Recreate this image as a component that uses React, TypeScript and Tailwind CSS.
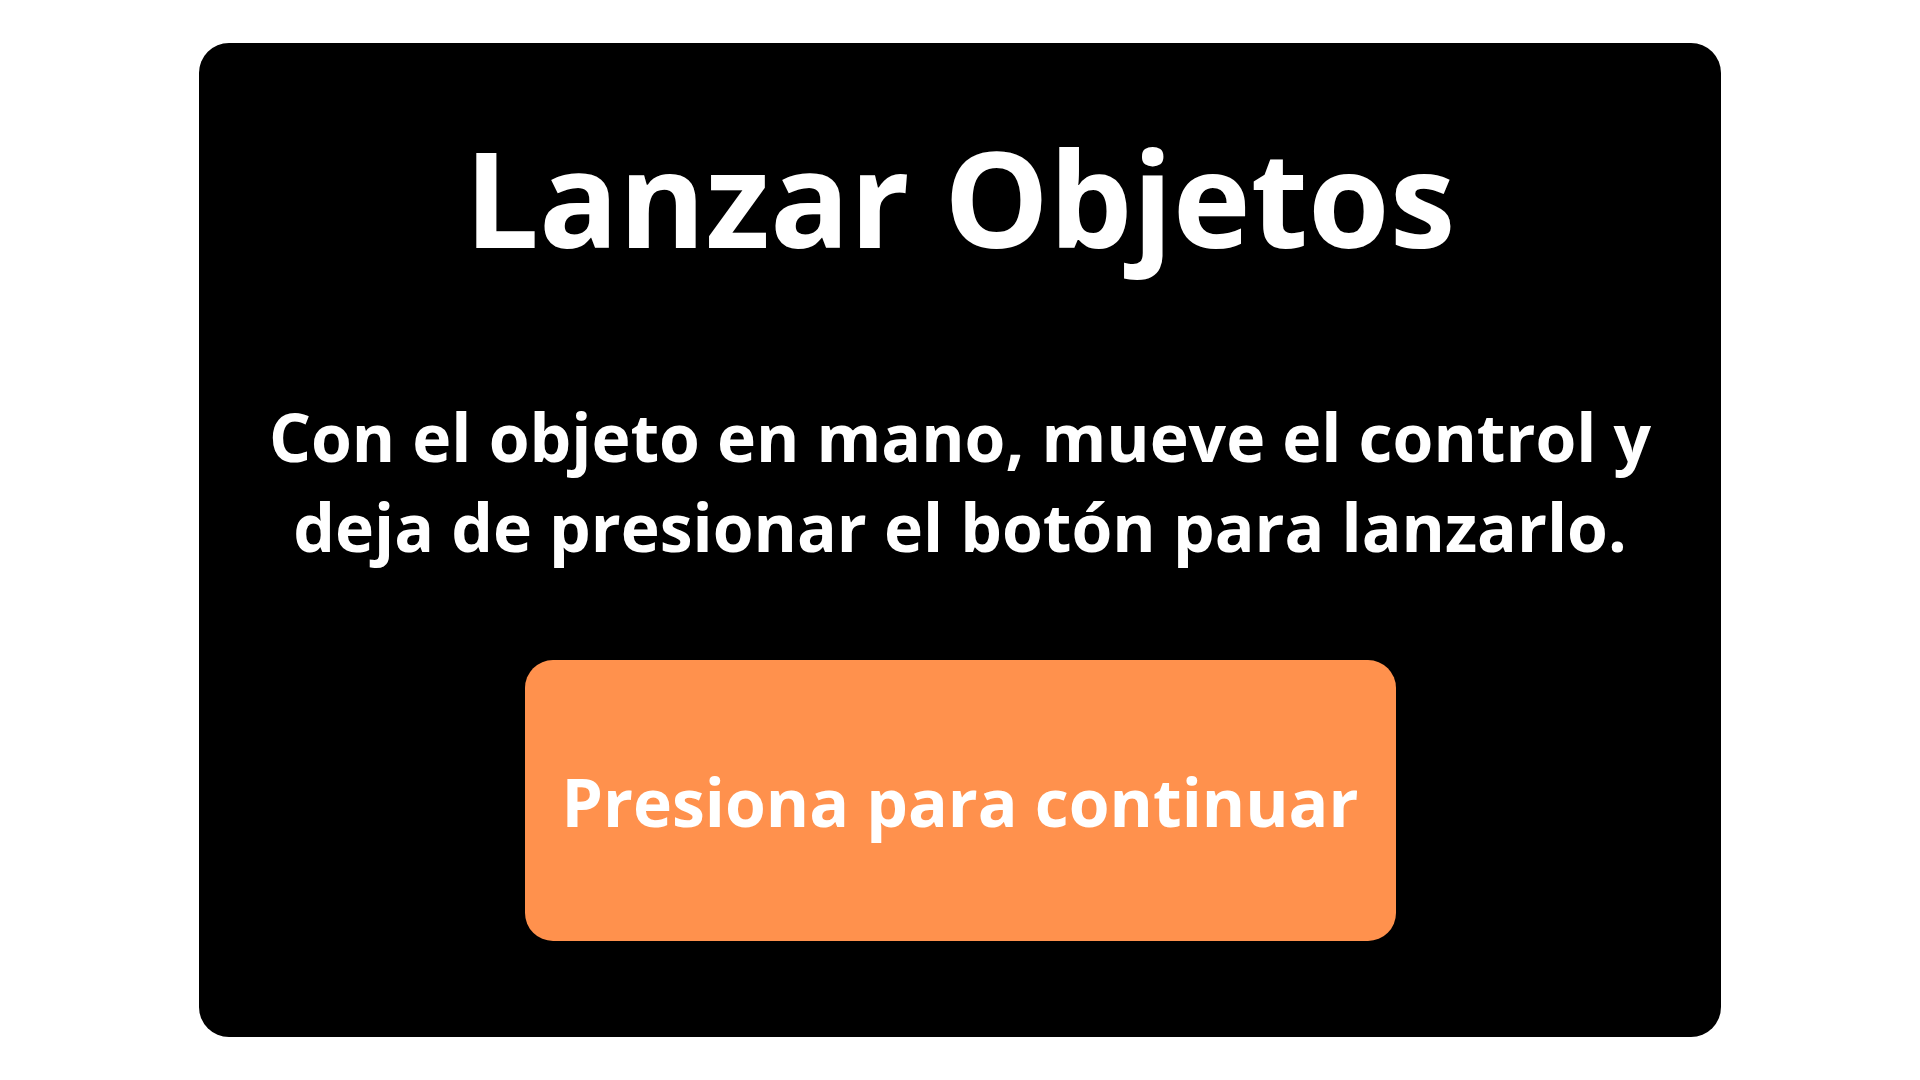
import React from 'react';

const App: React.FC = () => {
  return (
    <div className="w-[1920px] h-[1080px] bg-white flex items-start justify-center pt-[43px]" style={{ fontFamily: '"Open Sans", sans-serif' }}>
      <div className="w-[1522px] h-[994px] bg-black rounded-[30px] flex flex-col items-center pt-[89px] text-white font-bold">
        <h1 className="text-[132px] leading-[130px]">Lanzar Objetos</h1>
        <p className="mt-[129px] text-[66px] leading-[90px] text-center">
          Con el objeto en mano, mueve el control y
          <br />
          deja de presionar el botón para lanzarlo.
        </p>
        <button className="mt-[89px] w-[871px] h-[281px] bg-[#ff914d] rounded-[28px] text-[66px] leading-none text-white font-bold flex items-center justify-center">
          Presiona para continuar
        </button>
      </div>
    </div>
  );
};

export default App;
